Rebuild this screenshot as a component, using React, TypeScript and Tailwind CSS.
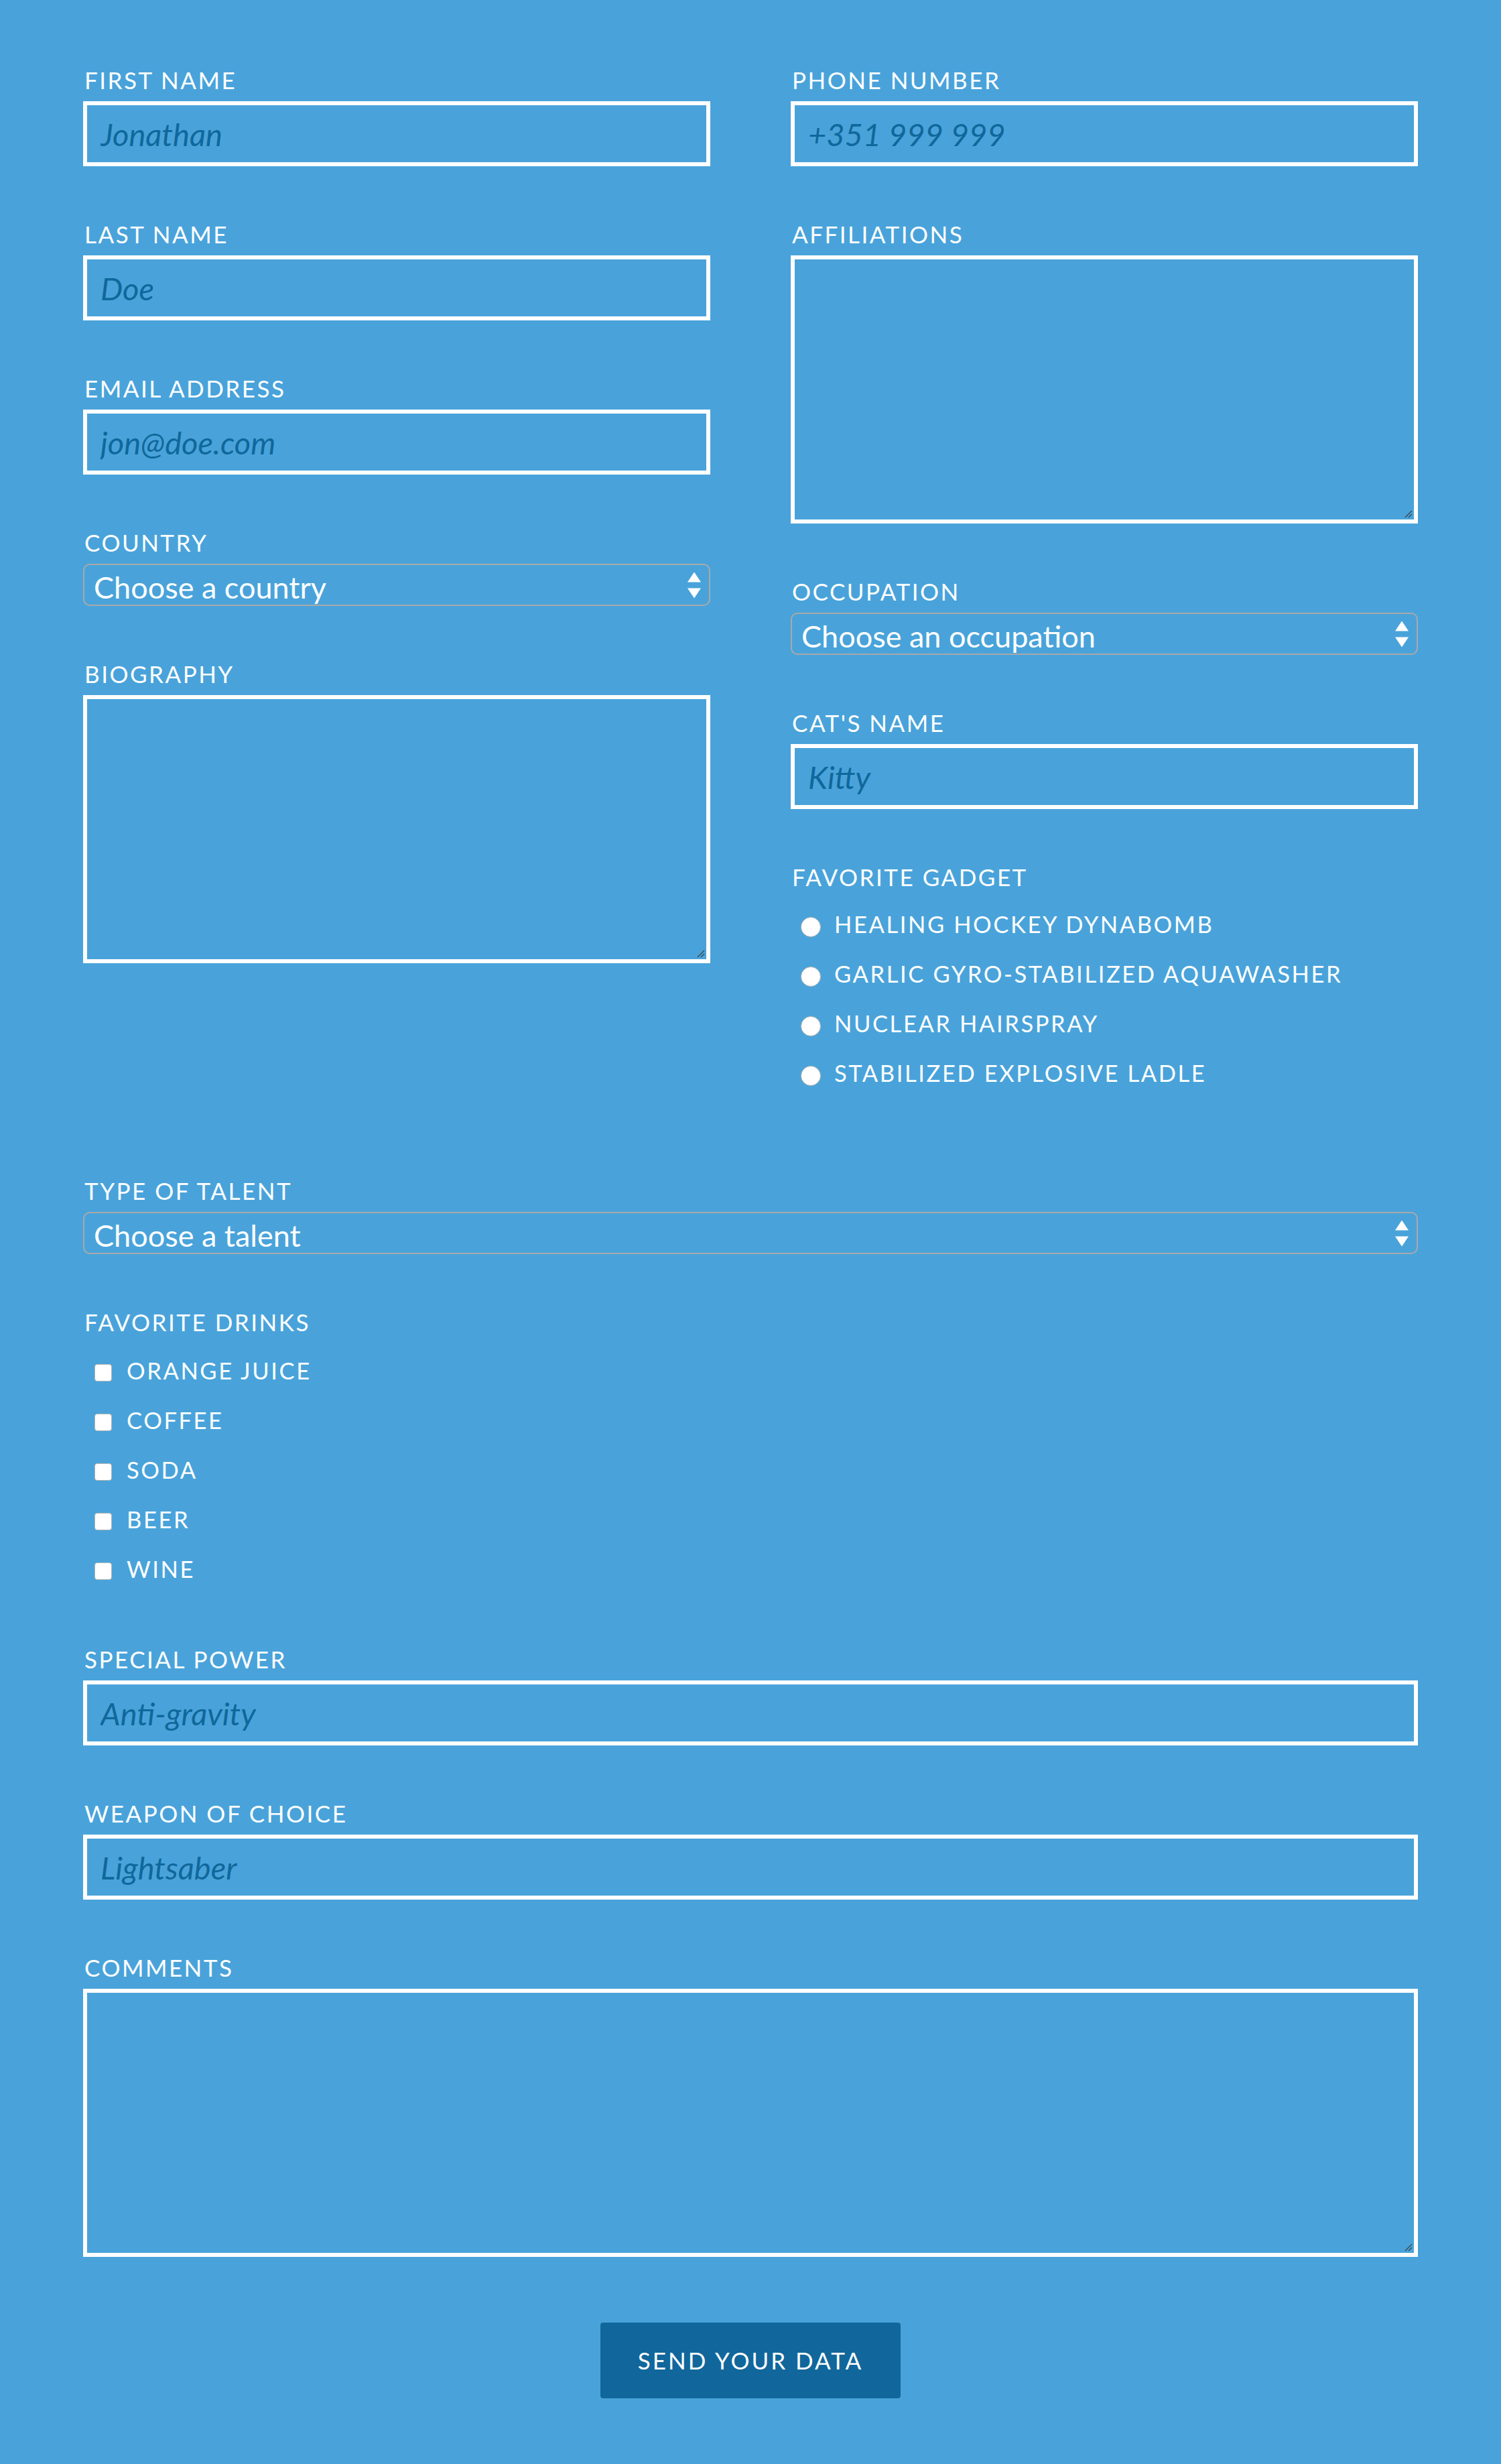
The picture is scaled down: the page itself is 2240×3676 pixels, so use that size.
import React from "react";

const labelCls =
  "block h-[42px] pl-[2px] text-[35px] leading-[42px] tracking-[2.5px] text-white mb-[11px]";

function Label({ children }: { children: React.ReactNode }) {
  return <label className={labelCls}>{children}</label>;
}

function TextField({ label, placeholder }: { label: string; placeholder: string }) {
  return (
    <div className="mb-[80px]">
      <Label>{label}</Label>
      <input
        type="text"
        placeholder={placeholder}
        className="block h-[97px] w-full border-[6px] border-white bg-transparent pl-[20px] text-[47px] text-white outline-none placeholder:italic placeholder:text-[#10679b]"
      />
    </div>
  );
}

function AreaField({ label, className = "mb-[80px]" }: { label: string; className?: string }) {
  return (
    <div className={className}>
      <Label>{label}</Label>
      <div className="relative">
        <textarea className="block h-[400px] w-full resize-none border-[6px] border-white bg-transparent text-[35px] text-white outline-none" />
        {/* resize grip */}
        <svg
          width="12"
          height="12"
          viewBox="0 0 12 12"
          className="pointer-events-none absolute bottom-[8px] right-[8px]"
        >
          <line x1="11" y1="1" x2="1" y2="11" stroke="#3a4a55" strokeWidth="1.5" />
          <line x1="11" y1="6" x2="6" y2="11" stroke="#3a4a55" strokeWidth="1.5" />
        </svg>
      </div>
    </div>
  );
}

function SelectField({ label, option }: { label: string; option: string }) {
  return (
    <div className="mb-[80px]">
      <Label>{label}</Label>
      <div className="relative">
        <select className="block h-[63px] w-full appearance-none rounded-[10px] border-2 border-[#a9a9a9] bg-transparent pl-[14px] text-[45px] text-white outline-none">
          <option className="text-black">{option}</option>
        </select>
        {/* native-looking up/down arrows */}
        <svg
          width="20"
          height="39"
          viewBox="0 0 20 39"
          className="pointer-events-none absolute right-[14px] top-1/2 -translate-y-1/2"
        >
          <polygon points="10,0 20,15 0,15" fill="white" />
          <polygon points="0,24 20,24 10,39" fill="white" />
        </svg>
      </div>
    </div>
  );
}

const gadgets = [
  "HEALING HOCKEY DYNABOMB",
  "GARLIC GYRO-STABILIZED AQUAWASHER",
  "NUCLEAR HAIRSPRAY",
  "STABILIZED EXPLOSIVE LADLE",
];

const drinks = ["ORANGE JUICE", "COFFEE", "SODA", "BEER", "WINE"];

export default function App() {
  return (
    <div className="min-h-screen bg-[#49a3da] px-[124px] pb-[97px] pt-[98px] font-[Lato,sans-serif]">
      <form onSubmit={(e) => e.preventDefault()}>
        <div className="grid grid-cols-2 items-start gap-x-[120px]">
          {/* left column */}
          <div className="flex flex-col">
            <TextField label="FIRST NAME" placeholder="Jonathan" />
            <TextField label="LAST NAME" placeholder="Doe" />
            <TextField label="EMAIL ADDRESS" placeholder="jon@doe.com" />
            <SelectField label="COUNTRY" option="Choose a country" />
            <AreaField label="BIOGRAPHY" className="" />
          </div>

          {/* right column */}
          <div className="flex flex-col">
            <TextField label="PHONE NUMBER" placeholder="+351 999 999" />
            <AreaField label="AFFILIATIONS" />
            <SelectField label="OCCUPATION" option="Choose an occupation" />
            <TextField label="CAT'S NAME" placeholder="Kitty" />
            <div>
              <span className="block h-[42px] pl-[2px] text-[35px] leading-[42px] tracking-[2.5px] text-white">
                FAVORITE GADGET
              </span>
              <div className="mt-[13px] flex flex-col">
                {gadgets.map((g) => (
                  <label key={g} className="flex h-[74px] items-center pl-[15px]">
                    <span className="mt-[8px] h-[30px] w-[30px] shrink-0 rounded-full border border-[#b3b3b3] bg-white" />
                    <span className="ml-[20px] text-[34.5px] tracking-[2.6px] text-white">{g}</span>
                  </label>
                ))}
              </div>
            </div>
          </div>
        </div>

        <div className="mt-[117px]">
          <SelectField label="TYPE OF TALENT" option="Choose a talent" />

          <div className="mb-[76px]">
            <span className="block h-[42px] pl-[2px] text-[35px] leading-[42px] tracking-[2.5px] text-white">
              FAVORITE DRINKS
            </span>
            <div className="mt-[15px] flex flex-col">
              {drinks.map((d) => (
                <label key={d} className="flex h-[74px] items-center pl-[17px]">
                  <span className="mt-[6px] h-[26px] w-[26px] shrink-0 rounded-[4px] border border-[#b3b3b3] bg-white" />
                  <span className="ml-[22px] text-[34.5px] tracking-[2.6px] text-white">{d}</span>
                </label>
              ))}
            </div>
          </div>

          <TextField label="SPECIAL POWER" placeholder="Anti-gravity" />
          <TextField label="WEAPON OF CHOICE" placeholder="Lightsaber" />
          <AreaField label="COMMENTS" className="" />
        </div>

        <button
          type="submit"
          className="mx-auto mt-[98px] flex h-[113px] w-[448px] items-center justify-center rounded-[4px] bg-[#11679b] text-[35px] tracking-[3px] text-white"
        >
          SEND YOUR DATA
        </button>
      </form>
    </div>
  );
}
